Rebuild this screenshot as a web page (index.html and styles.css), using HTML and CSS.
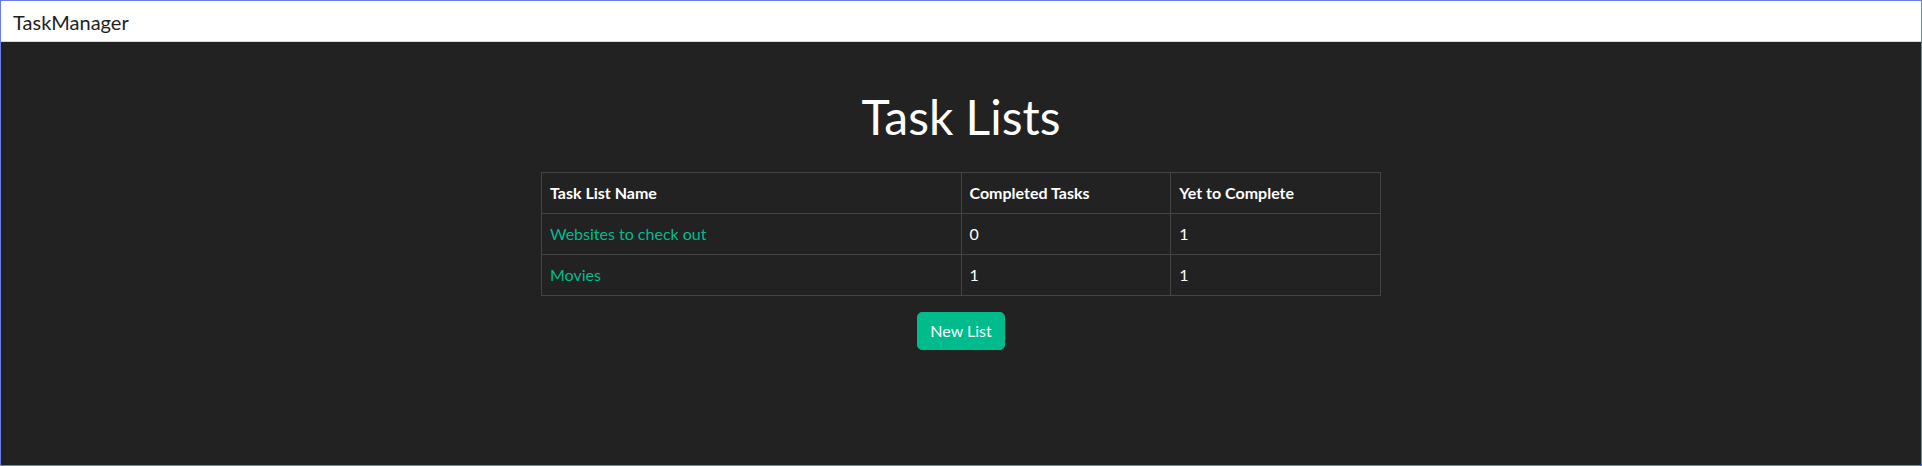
FILE: index.html
```html
<!DOCTYPE html>
<html lang="en">
<head>
<meta charset="utf-8">
<title>TaskManager</title>
<link rel="stylesheet" href="styles.css">
</head>
<body>
<div class="frame">
  <nav class="navbar">
    <a class="brand" href="#">TaskManager</a>
  </nav>
  <main class="content">
    <h1 class="title">Task Lists</h1>
    <table class="lists">
      <colgroup>
        <col class="c-name">
        <col class="c-num">
        <col class="c-num">
      </colgroup>
      <thead>
        <tr>
          <th>Task List Name</th>
          <th>Completed Tasks</th>
          <th>Yet to Complete</th>
        </tr>
      </thead>
      <tbody>
        <tr>
          <td><a href="#">Websites to check out</a></td>
          <td>0</td>
          <td>1</td>
        </tr>
        <tr>
          <td><a href="#">Movies</a></td>
          <td>1</td>
          <td>1</td>
        </tr>
      </tbody>
    </table>
    <a class="btn" href="#">New List</a>
  </main>
</div>
</body>
</html>
```
FILE: styles.css
```css
html, body {
  margin: 0;
  padding: 0;
  height: 100%;
}

body {
  font-family: Lato, "Open Sans", "Liberation Sans", sans-serif;
  background: #222222;
  color: #ffffff;
}

.frame {
  box-sizing: border-box;
  height: 100vh;
  border: 1px solid #6a7ee8;
  background: #222222;
  display: flex;
  flex-direction: column;
}

.navbar {
  background: #ffffff;
  box-sizing: border-box;
  height: 41px;
  padding: 9px 12px 7px;
  border-bottom: 1px solid #d8d8d8;
  flex: none;
}

.brand {
  font-size: 20px;
  line-height: 24px;
  color: #222222;
  text-decoration: none;
  display: block;
}

.content {
  display: flex;
  flex-direction: column;
  align-items: center;
  padding-top: 46px;
}

.title {
  font-size: 48px;
  font-weight: 400;
  line-height: 1.2;
  margin: 0 0 26px;
  color: #ffffff;
}

.lists {
  width: 840px;
  border-collapse: collapse;
  table-layout: fixed;
  border: 1px solid #444444;
  font-size: 16px;
  margin: 0 0 16px;
}

.c-name { width: 50%; }
.c-num { width: 25%; }

.lists th,
.lists td {
  border: 1px solid #444444;
  padding: 8px;
  line-height: 24px;
  text-align: left;
  color: #ffffff;
}

.lists th {
  font-weight: 700;
}

.lists a {
  color: #00bc8c;
  text-decoration: none;
}

.btn {
  display: inline-block;
  height: 38px;
  box-sizing: border-box;
  padding: 0 12px;
  line-height: 36px;
  border: 1px solid #00bc8c;
  border-radius: 5px;
  background: #00bc8c;
  color: #ffffff;
  font-size: 16px;
  text-decoration: none;
}
```
